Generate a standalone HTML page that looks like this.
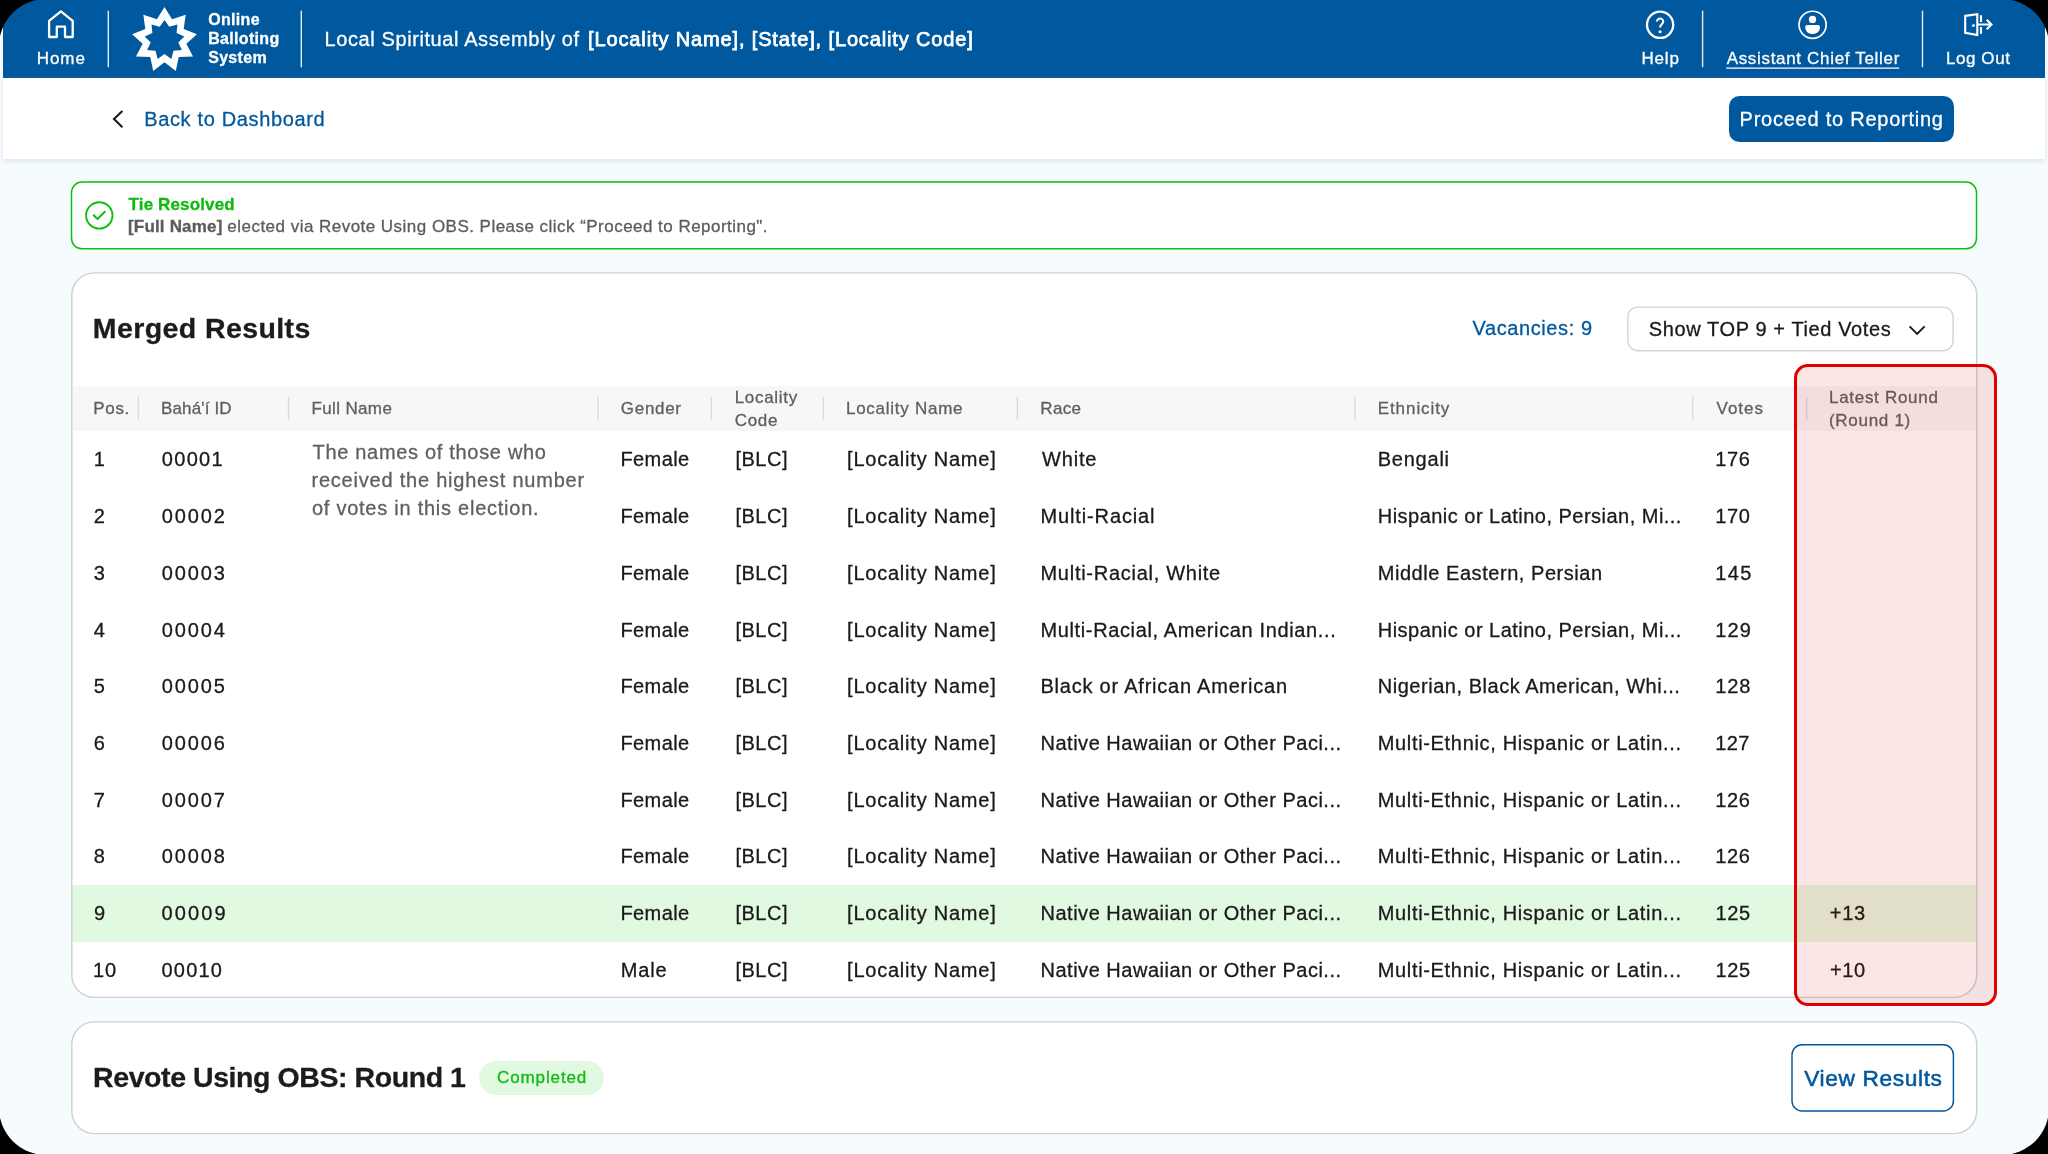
<!DOCTYPE html>
<html lang="en">
<head>
<meta charset="utf-8">
<title>Online Balloting System</title>
<style>
*{box-sizing:border-box;margin:0;padding:0}
html,body{width:2048px;height:1154px;overflow:hidden;background:#000}
body{font-family:"Liberation Sans",sans-serif;color:#1a1a1a;position:relative;-webkit-text-stroke:.3px}
.frame{position:absolute;left:0;top:0;width:2048px;height:1154px;background:#f6fbfe;overflow:hidden;clip-path:inset(-1.1px round 47.7px);will-change:transform}
.abs{position:absolute;white-space:nowrap}
.hdr{position:absolute;left:3px;top:0;width:2042px;height:78px;background:#00589e}
.t{position:absolute;color:#fff;white-space:nowrap;line-height:1}
.sub{position:absolute;left:3px;top:78px;width:2042px;height:81px;background:#fff;box-shadow:0 2px 5px rgba(160,190,220,.35)}
.btn-primary{position:absolute;left:1729px;top:96px;width:225px;height:46px;border-radius:10.5px;background:#00589e}
.alert{position:absolute;left:71.5px;top:182.1px;width:1905px;height:66.7px;border-radius:10.5px;background:#fff}
.card{position:absolute;left:71.8px;width:1904.9px;border-radius:22.5px;background:#fff;overflow:hidden}
.thead{position:absolute;left:0;width:100%;background:#f7f7f7}
.th{position:absolute;color:#5f5f5f;font-size:17px;line-height:22.4px;white-space:nowrap}
.row{position:absolute;left:0;width:100%;height:57px}
.row span{position:absolute;top:.3px;line-height:56.74px;font-size:20px;color:#1a1a1a;white-space:nowrap}
.hl{background:#e1f9e1}
.note{position:absolute;font-size:20px;line-height:28px;color:#606060;white-space:nowrap}
</style>
</head>
<body>
<div class="frame">
<div class="hdr" id="hdr">
<svg class="abs" style="left:0;top:0" width="2042" height="78" viewBox="0 0 2042 78" fill="none" stroke="#fff" stroke-width="2.3" stroke-linejoin="round" stroke-linecap="round">
      <!-- home -->
      <path id="ic-home" d="M57.9 11.4 L46.1 20.8 V37 H53.8 V26.7 H62 V37 H69.7 V20.8 Z"/>
      <!-- star logo -->
      <path stroke="none" fill="#fff" d="M161.50 7.10 L169.09 19.14 L182.65 14.80 L180.73 28.90 L193.90 34.29 L183.36 43.85 L189.99 56.45 L175.77 57.01 L172.75 70.92 L161.50 62.20 L150.25 70.92 L147.23 57.01 L133.01 56.45 L139.64 43.85 L129.10 34.29 L142.27 28.90 L140.35 14.80 L153.91 19.14Z"/>
      <path stroke="none" fill="#00589e" d="M161.50 19.90 L166.29 26.84 L174.42 24.60 L173.62 33.00 L181.29 36.51 L175.29 42.43 L178.91 50.05 L170.50 50.72 L168.37 58.89 L161.50 54.00 L154.63 58.89 L152.50 50.72 L144.09 50.05 L147.71 42.43 L141.71 36.51 L149.38 33.00 L148.58 24.60 L156.71 26.84Z"/>
      <!-- help -->
      <circle cx="1657.1" cy="24.8" r="13.1" stroke-width="2.3"/>
      <path d="M1654 21.6 A3.1 3.1 0 0 1 1660.2 21.6 C1660.2 24.2 1657.1 24.4 1657.1 27.4" stroke-width="2.1" stroke-linecap="butt"/>
      <circle cx="1657.1" cy="31.7" r="1.5" fill="#fff" stroke="none"/>
      <!-- user -->
      <circle cx="1809.6" cy="24.8" r="13.55" stroke-width="1.7"/>
      <circle cx="1809.5" cy="19.45" r="3.65" fill="#fff" stroke="none"/>
      <path d="M1802.2 27 Q1802.2 24.9 1804.2 24.9 H1815 Q1817 24.9 1817 27 C1817 31.4 1813.6 34 1809.6 34 C1805.6 34 1802.2 31.4 1802.2 27Z" fill="#fff" stroke="none"/>
      <!-- logout -->
      <path d="M1962.2 15.9 L1974.3 14.1 V35 L1962.2 32.8 Z" stroke-width="2.1" stroke-linejoin="miter"/>
      <circle cx="1970.5" cy="25.6" r="1.4" fill="#fff" stroke="none"/>
      <path d="M1978 15.2 V22 M1978 27 V33.8 M1974.3 24.5 H1988.2 M1983.7 19.7 L1988.5 24.5 L1983.7 29.3" stroke-width="2.1" stroke-linecap="butt" stroke-linejoin="miter"/>
    </svg>
<div class="t" id="t-home" style="left:33.82px;top:50.00px;letter-spacing:0.896px;font-size:17px">Home</div>
<div class="t" id="t-obs" style="left:205.13px;top:10.00px;letter-spacing:0.336px;font-size:16px;font-weight:bold;line-height:19px">Online<br>Balloting<br>System</div>
<div class="t" id="t-title1" style="left:321.57px;top:28.50px;letter-spacing:0.593px;font-size:20px">Local Spiritual Assembly of</div>
<div class="t" id="t-title2" style="left:585.09px;top:28.50px;letter-spacing:0.866px;font-size:20px;-webkit-text-stroke:.75px">[Locality Name], [State], [Locality Code]</div>
<div class="t" id="t-help" style="left:1638.38px;top:50.00px;letter-spacing:0.842px;font-size:17px">Help</div>
<div class="t" id="t-act" style="left:1723.64px;top:50.00px;letter-spacing:0.680px;font-size:17px">Assistant Chief Teller</div>
<div class="t" id="t-logout" style="left:1943.02px;top:50.00px;letter-spacing:0.566px;font-size:17px">Log Out</div>
</div>
<div class="sub" id="sub">
<svg class="abs" style="left:108px;top:30px" width="14" height="22" viewBox="0 0 14 22" fill="none" stroke="#1a1a1a" stroke-width="2.1" stroke-linejoin="miter"><path d="M11.4 3 L3 11 L11.4 19.2"/></svg>
<div class="abs" id="t-back" style="left:141.20px;top:30.00px;letter-spacing:0.649px;font-size:20px;line-height:22px;color:#00589e">Back to Dashboard</div>
</div>
<div class="btn-primary" id="btn-proceed"><div class="abs" id="t-proceed" style="left:10.60px;top:12.00px;letter-spacing:0.756px;font-size:20px;line-height:22px;color:#fff">Proceed to Reporting</div></div>
<div class="alert" id="alert">
<svg class="abs" style="left:12.5px;top:17.9px" width="32" height="32" viewBox="0 0 32 32" fill="none" stroke="#0cbf0c" stroke-width="2"><circle cx="15.3" cy="15.4" r="13.2" stroke-width="1.9"/><path d="M9.7 15.25 L13.5 19.05 L20.8 11.8" stroke-width="2" stroke-linecap="round" stroke-linejoin="round"/></svg>
<div class="abs" id="t-tie" style="left:57.10px;top:13.30px;letter-spacing:0.131px;font-size:17px;line-height:20px;font-weight:bold;color:#10ba10">Tie Resolved</div>
<div class="abs" id="t-fn" style="left:56.51px;top:34.90px;letter-spacing:0.174px;font-size:17px;line-height:20px;font-weight:bold;color:#5c5c5c">[Full Name]</div>
<div class="abs" id="t-msg2" style="left:155.86px;top:34.90px;letter-spacing:0.470px;font-size:17px;line-height:20px;color:#5c5c5c">elected via Revote Using OBS. Please click &ldquo;Proceed to Reporting&quot;.</div>
</div>
<div class="card" id="card1" style="top:272.9px;height:724.5px">
<div class="abs" id="t-merged" style="left:21.00px;top:39.10px;letter-spacing:0.405px;font-size:28.5px;line-height:32px;font-weight:bold;color:#1c1c1c">Merged Results</div>
<div class="abs" id="t-vac" style="left:1400.68px;top:43.70px;letter-spacing:0.600px;font-size:20px;line-height:22px;color:#00589e">Vacancies: 9</div>
<div class="abs" id="t-dd" style="left:1577.00px;top:44.80px;letter-spacing:0.611px;font-size:20px;line-height:22px;color:#1a1a1a">Show TOP 9 + Tied Votes</div>
<svg class="abs" style="left:1834.7px;top:49.10000000000002px" width="22" height="16" viewBox="0 0 22 16" fill="none" stroke="#1a1a1a" stroke-width="2"><path d="M3.6 4.4 L11.1 11.9 L18.6 4.4"/></svg>
<div class="thead" id="thead" style="top:113.30000000000001px;height:44.8px">
<div class="th" id="th-pos" style="left:21.55px;top:11.70px;letter-spacing:0.660px;">Pos.</div>
<div class="th" id="th-id" style="left:89.24px;top:11.70px;letter-spacing:0.147px;">Bah&aacute;&#39;&iacute; ID</div>
<div class="th" id="th-name" style="left:239.60px;top:11.70px;letter-spacing:0.374px;">Full Name</div>
<div class="th" id="th-gender" style="left:549.03px;top:11.70px;letter-spacing:0.696px;">Gender</div>
<div class="th" id="th-code" style="left:662.92px;top:1.20px;letter-spacing:0.699px;">Locality<br>Code</div>
<div class="th" id="th-loc" style="left:774.17px;top:11.70px;letter-spacing:0.735px;">Locality Name</div>
<div class="th" id="th-race" style="left:968.44px;top:11.70px;letter-spacing:0.380px;">Race</div>
<div class="th" id="th-eth" style="left:1305.92px;top:11.70px;letter-spacing:0.927px;">Ethnicity</div>
<div class="th" id="th-votes" style="left:1644.76px;top:11.70px;letter-spacing:0.974px;">Votes</div>
<div class="th" id="th-latest" style="left:1757.20px;top:1.20px;letter-spacing:0.706px;">Latest Round<br>(Round 1)</div>
</div>
<div class="row" id="row1" style="top:158.10px">
<span id="r1-pos" style="left:21.84px;letter-spacing:0.500px">1</span>
<span id="r1-id" style="left:90.01px;letter-spacing:1.313px">00001</span>
<span id="r1-gender" style="left:548.70px;letter-spacing:0.389px">Female</span>
<span id="r1-code" style="left:663.65px;letter-spacing:0.520px">[BLC]</span>
<span id="r1-loc" style="left:775.28px;letter-spacing:0.776px">[Locality Name]</span>
<span id="r1-race" style="left:970.11px;letter-spacing:0.860px">White</span>
<span id="r1-eth" style="left:1305.93px;letter-spacing:0.770px">Bengali</span>
<span id="r1-votes" style="left:1643.51px;letter-spacing:0.591px">176</span>
</div>
<div class="row" id="row2" style="top:214.84px">
<span id="r2-pos" style="left:21.94px;letter-spacing:0.500px">2</span>
<span id="r2-id" style="left:90.01px;letter-spacing:1.885px">00002</span>
<span id="r2-gender" style="left:548.70px;letter-spacing:0.389px">Female</span>
<span id="r2-code" style="left:663.65px;letter-spacing:0.520px">[BLC]</span>
<span id="r2-loc" style="left:775.28px;letter-spacing:0.776px">[Locality Name]</span>
<span id="r2-race" style="left:968.70px;letter-spacing:0.874px">Multi-Racial</span>
<span id="r2-eth" style="left:1305.93px;letter-spacing:0.479px">Hispanic or Latino, Persian, Mi...</span>
<span id="r2-votes" style="left:1643.51px;letter-spacing:0.600px">170</span>
</div>
<div class="row" id="row3" style="top:271.58px">
<span id="r3-pos" style="left:21.94px;letter-spacing:0.500px">3</span>
<span id="r3-id" style="left:90.01px;letter-spacing:1.885px">00003</span>
<span id="r3-gender" style="left:548.70px;letter-spacing:0.389px">Female</span>
<span id="r3-code" style="left:663.65px;letter-spacing:0.520px">[BLC]</span>
<span id="r3-loc" style="left:775.28px;letter-spacing:0.776px">[Locality Name]</span>
<span id="r3-race" style="left:968.70px;letter-spacing:0.725px">Multi-Racial, White</span>
<span id="r3-eth" style="left:1305.93px;letter-spacing:0.549px">Middle Eastern, Persian</span>
<span id="r3-votes" style="left:1643.51px;letter-spacing:1.301px">145</span>
</div>
<div class="row" id="row4" style="top:328.32px">
<span id="r4-pos" style="left:21.94px;letter-spacing:0.500px">4</span>
<span id="r4-id" style="left:90.01px;letter-spacing:1.885px">00004</span>
<span id="r4-gender" style="left:548.70px;letter-spacing:0.389px">Female</span>
<span id="r4-code" style="left:663.65px;letter-spacing:0.520px">[BLC]</span>
<span id="r4-loc" style="left:775.28px;letter-spacing:0.776px">[Locality Name]</span>
<span id="r4-race" style="left:968.70px;letter-spacing:0.631px">Multi-Racial, American Indian...</span>
<span id="r4-eth" style="left:1305.93px;letter-spacing:0.479px">Hispanic or Latino, Persian, Mi...</span>
<span id="r4-votes" style="left:1643.51px;letter-spacing:1.141px">129</span>
</div>
<div class="row" id="row5" style="top:385.06px">
<span id="r5-pos" style="left:21.94px;letter-spacing:0.500px">5</span>
<span id="r5-id" style="left:90.01px;letter-spacing:1.885px">00005</span>
<span id="r5-gender" style="left:548.70px;letter-spacing:0.389px">Female</span>
<span id="r5-code" style="left:663.65px;letter-spacing:0.520px">[BLC]</span>
<span id="r5-loc" style="left:775.28px;letter-spacing:0.776px">[Locality Name]</span>
<span id="r5-race" style="left:968.70px;letter-spacing:0.778px">Black or African American</span>
<span id="r5-eth" style="left:1305.93px;letter-spacing:0.534px">Nigerian, Black American, Whi...</span>
<span id="r5-votes" style="left:1643.51px;letter-spacing:0.844px">128</span>
</div>
<div class="row" id="row6" style="top:441.80px">
<span id="r6-pos" style="left:21.94px;letter-spacing:0.500px">6</span>
<span id="r6-id" style="left:90.01px;letter-spacing:1.885px">00006</span>
<span id="r6-gender" style="left:548.70px;letter-spacing:0.389px">Female</span>
<span id="r6-code" style="left:663.65px;letter-spacing:0.520px">[BLC]</span>
<span id="r6-loc" style="left:775.28px;letter-spacing:0.776px">[Locality Name]</span>
<span id="r6-race" style="left:968.70px;letter-spacing:0.517px">Native Hawaiian or Other Paci...</span>
<span id="r6-eth" style="left:1305.93px;letter-spacing:0.667px">Multi-Ethnic, Hispanic or Latin...</span>
<span id="r6-votes" style="left:1643.51px;letter-spacing:0.329px">127</span>
</div>
<div class="row" id="row7" style="top:498.54px">
<span id="r7-pos" style="left:21.94px;letter-spacing:0.500px">7</span>
<span id="r7-id" style="left:90.01px;letter-spacing:1.885px">00007</span>
<span id="r7-gender" style="left:548.70px;letter-spacing:0.389px">Female</span>
<span id="r7-code" style="left:663.65px;letter-spacing:0.520px">[BLC]</span>
<span id="r7-loc" style="left:775.28px;letter-spacing:0.776px">[Locality Name]</span>
<span id="r7-race" style="left:968.70px;letter-spacing:0.517px">Native Hawaiian or Other Paci...</span>
<span id="r7-eth" style="left:1305.93px;letter-spacing:0.667px">Multi-Ethnic, Hispanic or Latin...</span>
<span id="r7-votes" style="left:1643.51px;letter-spacing:0.592px">126</span>
</div>
<div class="row" id="row8" style="top:555.28px">
<span id="r8-pos" style="left:21.94px;letter-spacing:0.500px">8</span>
<span id="r8-id" style="left:90.01px;letter-spacing:1.885px">00008</span>
<span id="r8-gender" style="left:548.70px;letter-spacing:0.389px">Female</span>
<span id="r8-code" style="left:663.65px;letter-spacing:0.520px">[BLC]</span>
<span id="r8-loc" style="left:775.28px;letter-spacing:0.776px">[Locality Name]</span>
<span id="r8-race" style="left:968.70px;letter-spacing:0.517px">Native Hawaiian or Other Paci...</span>
<span id="r8-eth" style="left:1305.93px;letter-spacing:0.667px">Multi-Ethnic, Hispanic or Latin...</span>
<span id="r8-votes" style="left:1643.51px;letter-spacing:0.592px">126</span>
</div>
<div class="row hl" id="row9" style="top:612.00px">
<span id="r9-pos" style="left:22.08px;letter-spacing:0.500px">9</span>
<span id="r9-id" style="left:89.60px;letter-spacing:2.146px">00009</span>
<span id="r9-gender" style="left:548.70px;letter-spacing:0.389px">Female</span>
<span id="r9-code" style="left:663.65px;letter-spacing:0.520px">[BLC]</span>
<span id="r9-loc" style="left:775.28px;letter-spacing:0.776px">[Locality Name]</span>
<span id="r9-race" style="left:968.70px;letter-spacing:0.517px">Native Hawaiian or Other Paci...</span>
<span id="r9-eth" style="left:1305.93px;letter-spacing:0.667px">Multi-Ethnic, Hispanic or Latin...</span>
<span id="r9-votes" style="left:1643.61px;letter-spacing:0.735px">125</span>
<span id="r9-latest" style="left:1757.98px;letter-spacing:0.687px">+13</span>
</div>
<div class="row" id="row10" style="top:668.76px">
<span id="r10-pos" style="left:21.19px;letter-spacing:0.876px">10</span>
<span id="r10-id" style="left:89.70px;letter-spacing:1.203px">00010</span>
<span id="r10-gender" style="left:548.93px;letter-spacing:0.890px">Male</span>
<span id="r10-code" style="left:663.65px;letter-spacing:0.520px">[BLC]</span>
<span id="r10-loc" style="left:775.28px;letter-spacing:0.776px">[Locality Name]</span>
<span id="r10-race" style="left:968.70px;letter-spacing:0.517px">Native Hawaiian or Other Paci...</span>
<span id="r10-eth" style="left:1305.93px;letter-spacing:0.667px">Multi-Ethnic, Hispanic or Latin...</span>
<span id="r10-votes" style="left:1643.61px;letter-spacing:0.735px">125</span>
<span id="r10-latest" style="left:1758.24px;letter-spacing:0.531px">+10</span>
</div>
<div class="note" id="t-note1" style="left:240.76px;top:165.10px;letter-spacing:0.685px;">The names of those who</div>
<div class="note" id="t-note2" style="left:239.66px;top:193.30px;letter-spacing:0.783px;">received the highest number</div>
<div class="note" id="t-note3" style="left:240.12px;top:221.50px;letter-spacing:0.753px;">of votes in this election.</div>
</div>
<div class="card" id="card2" style="top:1021.9px;height:111.7px">
<div class="abs" id="t-revote" style="left:21.31px;top:39.50px;letter-spacing:-0.430px;font-size:28.5px;line-height:32px;font-weight:bold;color:#1c1c1c">Revote Using OBS: Round 1</div>
<div class="abs" id="pill" style="left:407.59999999999997px;top:39.30000000000007px;width:124.6px;height:33.8px;border-radius:17px;background:#e1f9e1"></div>
<div class="abs" id="t-comp" style="left:425.25px;top:46.10px;letter-spacing:0.877px;font-size:17px;line-height:20px;color:#10ba10">Completed</div>
<div class="abs" id="t-view" style="left:1732.41px;top:42.50px;letter-spacing:0.610px;-webkit-text-stroke:.55px;font-size:22.75px;line-height:28px;color:#00589e">View Results</div>
</div>
<svg class="abs" id="lines" style="left:0;top:0" width="2048" height="1154" viewBox="0 0 2048 1154" fill="none">
<path d="M108.3 10.7V67.2" stroke="#e4edf5" stroke-width="1.42"/>
<path d="M301.3 10.7V67.2" stroke="#e4edf5" stroke-width="1.42"/>
<path d="M1702.6 10.7V67.2" stroke="#e4edf5" stroke-width="1.42"/>
<path d="M1922.5 10.7V67.2" stroke="#e4edf5" stroke-width="1.42"/>
<path d="M1726.2 68.2H1899.2" stroke="#fff" stroke-width="1.3"/>
<rect x="71.5" y="182.1" width="1905" height="66.7" rx="10.5" stroke="#0cbf0c" stroke-width="1.5"/>
<rect x="71.8" y="272.9" width="1904.9" height="724.5" rx="22.5" stroke="#d2d0cf" stroke-width="1.42"/>
<rect x="71.8" y="1021.9" width="1904.9" height="111.7" rx="22.5" stroke="#d2d0cf" stroke-width="1.42"/>
<rect x="1627.8" y="307.1" width="325.3" height="43.6" rx="9.7" stroke="#d4d4d2" stroke-width="1.42"/>
<rect x="1792" y="1044.8" width="161.4" height="66.2" rx="10" stroke="#00589e" stroke-width="1.45"/>
<path d="M138.4 397V420" stroke="#dadada" stroke-width="1.42"/>
<path d="M288.5 397V420" stroke="#dadada" stroke-width="1.42"/>
<path d="M598.1 397V420" stroke="#dadada" stroke-width="1.42"/>
<path d="M711.4 397V420" stroke="#dadada" stroke-width="1.42"/>
<path d="M823.4 397V420" stroke="#dadada" stroke-width="1.42"/>
<path d="M1017.4 397V420" stroke="#dadada" stroke-width="1.42"/>
<path d="M1355 397V420" stroke="#dadada" stroke-width="1.42"/>
<path d="M1692.7 397V420" stroke="#dadada" stroke-width="1.42"/>
<path d="M1806.6 397V420" stroke="#dadada" stroke-width="1.42"/>
</svg>
<div class="abs" id="redbox" style="left:1794px;top:364.2px;width:203px;height:641.6px;border:3px solid #e00000;border-radius:14px;background:rgba(226,0,0,.1)"></div>
</div>
</body>
</html>
